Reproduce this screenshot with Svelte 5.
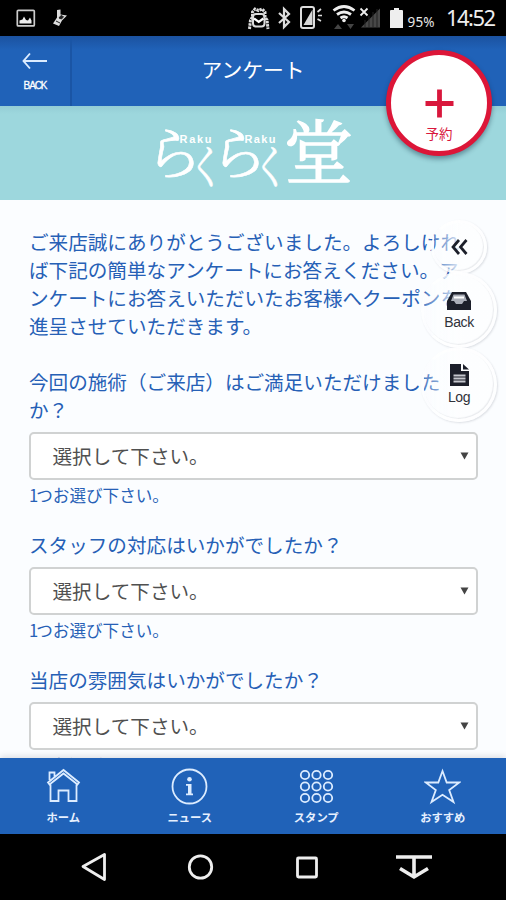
<script>
    const questions = [
        ['今回の施術（ご来店）はご満足いただけました', 'か？'],
        ['スタッフの対応はいかがでしたか？'],
        ['当店の雰囲気はいかがでしたか？']
    ];

    const intro = [
        'ご来店誠にありがとうございました。よろしけれ',
        'ば下記の簡単なアンケートにお答えください。ア',
        'ンケートにお答えいただいたお客様へクーポンを',
        '進呈させていただきます。'
    ];

    const tabs = [
        { name: 'home', label: 'ホーム' },
        { name: 'news', label: 'ニュース' },
        { name: 'stamp', label: 'スタンプ' },
        { name: 'star', label: 'おすすめ' }
    ];

    const dots = [7, 18.5, 30];
</script>

<div class="screen">
    <div class="status">
        <svg width="506" height="36" viewBox="0 0 506 36">
            <!-- picture -->
            <rect x="17.3" y="10.3" width="17" height="15.6" rx="1" fill="none" stroke="#ccc" stroke-width="1.7" />
            <path d="M19.500 23.500v-3l3-1 1.500-3 2 3.500 2 .5 2-3 1.500 3v3z" fill="#eee" />
            <!-- cleaner -->
            <path d="M57 10l3.500-.5v5l6.500 1-5 5-3 5.500-6-2.500 4-6z" fill="#ddd" />
            <path d="M61 15.500l2.500 1.200-2 2.300-2.500-1zM56 21l4 2" fill="#222" stroke="#222" />
            <!-- mascot -->
            <path d="M249.500 29l1-9 2-3V12l2.500-3 3.500 1.500L262 9l3 3v5l2 3 1 9" fill="none" stroke="#ddd" stroke-width="3" stroke-dasharray="2.500 .8" />
            <rect x="253" y="14" width="11.500" height="12.500" rx="3" fill="none" stroke="#ddd" stroke-width="2" />
            <path d="M254 18.500l4.700 3.500 4.700-3.500" fill="none" stroke="#fff" stroke-width="2.200" />
            <!-- bluetooth -->
            <path d="M279 13l10 9-5 5V9l5 5-10 9" fill="none" stroke="#ddd" stroke-width="2.200" />
            <!-- phone -->
            <rect x="301" y="7" width="13" height="21" rx="2" fill="none" stroke="#ddd" stroke-width="2" />
            <path d="M303.500 25l9-15.500V25z" fill="#eee" opacity=".9" />
            <path d="M317.500 12l3.500-3M318 15.500h4M317.500 19l3.500 2" stroke="#ddd" stroke-width="1.700" />
            <!-- wifi -->
            <g fill="none" stroke="#eee" stroke-width="2.800">
                <path d="M333.500 10.500q10.500-8 21 0" />
                <path d="M337 14.500q7-5 14 0" />
                <path d="M340.500 18q3.500-2.500 7 0" />
            </g>
            <circle cx="344" cy="20.500" r="1.800" fill="#eee" />
            <path d="M334 29l4-5 4 5zM347 24h7l-3.500 5z" fill="#444" />
            <!-- signal -->
            <path d="M360.500 8.500l7 7M367.500 8.500l-7 7" stroke="#eee" stroke-width="1.800" />
            <path d="M361 27.500l19-19v19z" fill="#484848" />
            <path d="M365 20v8M369 16v12M373 12v16M377 9v19" stroke="#222" />
            <!-- battery -->
            <path d="M391 10h3v-2h5v2h3a1 1 0 0 1 1 1v17h-13V11a1 1 0 0 1 1-1z" fill="#eee" />
            <text x="407.500" y="27" class="percent" textLength="27">95%</text>
            <text x="446" y="26" class="clock" textLength="50">14:52</text>
        </svg>
    </div>

    <header>
        <div class="back">
            <svg width="26" height="18" viewBox="0 0 26 18">
                <path d="M25 9H1.500M8 1.500L1.500 9 8 16.500" fill="none" stroke="#dcecff" stroke-width="1.900" />
            </svg>
            <span>BACK</span>
        </div>
        <h1>アンケート</h1>
    </header>

    <div class="banner">
        <svg width="506" height="94" viewBox="0 0 506 94" fill="#fff">
            <g class="kana">
                <text transform="translate(146 67.600) scale(1.215 1.230)">ら</text>
                <text transform="translate(188 76.500) scale(.79 1)">く</text>
                <text transform="translate(211 67.600) scale(1.215 1.230)">ら</text>
                <text transform="translate(252.500 76.500) scale(.79 1)">く</text>
            </g>
            <text class="kanji" x="284" y="71.500">堂</text>
            <text class="roman" x="179.500" y="37" textLength="32">Raku</text>
            <text class="roman" x="244.500" y="37" textLength="31">Raku</text>
        </svg>
    </div>

    <main>
        <p class="intro">
            {#each intro as line}
                <span>{line}</span>
            {/each}
        </p>
        {#each questions as lines}
            <div class="question">
                <div class="label">
                    {#each lines as line}
                        <span>{line}</span>
                    {/each}
                </div>
                <div class="select">
                    <span>選択して下さい。</span>
                    <svg width="9" height="8" viewBox="0 0 9 8"><path d="M.5.500h8L4.500 7.500z" fill="#444" /></svg>
                </div>
                <div class="hint">1つお選び下さい。</div>
            </div>
        {/each}
    </main>

    <nav class="tabs">
        {#each tabs as tab}
            <div class="tab">
                <svg width="37" height="37" viewBox="0 0 37 37" fill="none" stroke="#dcecff" stroke-width="1.800">
                    {#if tab.name === 'home'}
                        <path d="M3 14.500L18.500 2 34 14.500l-1.500 2L18.500 5.500 4.500 16.500zM4.500 12V4.500h5v4M5.500 16.500V33h8V22.500h10V33h8V16.500" />
                    {:else if tab.name === 'news'}
                        <circle cx="18.500" cy="18.500" r="17" />
                        <circle cx="18.500" cy="11.300" r="2.300" fill="#dcecff" stroke="none" />
                        <path d="M15 16h5.500v9.500H22v1.700h-7v-1.700h2v-7.800h-2z" fill="#dcecff" stroke="none" />
                    {:else if tab.name === 'stamp'}
                        {#each dots as y}
                            {#each dots as x}
                                <circle cx={x} cy={y} r="4.200" />
                            {/each}
                        {/each}
                    {:else}
                        <path d="M18.500 3l4.200 11.500h12.600L25.200 22 29.500 34 18.500 26.800 7.500 34l4.300-12L1.700 14.500h12.600z" />
                    {/if}
                </svg>
                <span>{tab.label}</span>
            </div>
        {/each}
    </nav>

    <div class="android">
        <svg width="506" height="66" viewBox="0 0 506 66" fill="none" stroke="#eee" stroke-width="2.800">
            <path d="M83 32.500L104.500 20.500v25z" stroke-linejoin="round" />
            <circle cx="200.500" cy="33" r="11.200" />
            <rect x="297.500" y="24" width="19" height="19" rx="1" />
            <path d="M396 23h36M414 23v20M400 34.500l14 8.500 14-8.500" stroke-width="3.600" />
        </svg>
    </div>

    <div class="reserve">
        <svg width="29" height="29" viewBox="0 0 29 29">
            <path d="M14.500.500v28M.5 14.500h28" stroke="#d9173c" stroke-width="4.800" />
        </svg>
        <span>予約</span>
    </div>

    <div class="bubble fold">
        <svg width="17" height="16" viewBox="0 0 17 16">
            <path d="M8 1L2 8l6 7M15.500 1l-6 7 6 7" fill="none" stroke="#1c1f2a" stroke-width="2.700" />
        </svg>
    </div>
    <div class="bubble inbox">
        <svg width="24" height="18" viewBox="0 0 24 18">
            <path d="M5 0h14l5 9v9H0V9z" fill="#1c1f2a" />
            <path d="M6.500 2.500h11L20 9h-3l-2 3H9L7 9H4z" fill="#aaaeb8" />
            <path d="M7 5.500h10" stroke="#fff" stroke-width="2" />
        </svg>
        <span>Back</span>
    </div>
    <div class="bubble log">
        <svg width="19" height="22" viewBox="0 0 19 22">
            <path d="M0 0h11v7h8v15H0zM13 0l6 5.500h-6z" fill="#1c1f2a" />
            <path d="M3.500 11.500h12M3.500 14.500h12M3.500 17.500h12" stroke="#c5c7ce" stroke-width="1.800" />
        </svg>
        <span>Log</span>
    </div>
</div>

<style>
    :global(body) {
        margin: 0;
        background: #000;
    }

    .screen {
        position: relative;
        display: flex;
        flex-direction: column;
        width: 506px;
        height: 900px;
        overflow: hidden;
        font-family: "Noto Sans CJK JP", sans-serif;
        color: #2660b6;
    }

    svg {
        display: block;
        flex: none;
    }

    .status {
        height: 36px;
        background: #000;
    }

    .percent {
        fill: #e6e6e6;
        font: 13.5px "Noto Sans", sans-serif;
    }

    .clock {
        fill: #eee;
        font: 22px "Noto Sans", sans-serif;
    }

    header {
        display: flex;
        height: 70px;
        flex: none;
        background: linear-gradient(#1b52a0, #2062b8 14px, #2062b8);
        color: #fff;
    }

    .back {
        display: flex;
        flex-direction: column;
        align-items: center;
        box-sizing: border-box;
        width: 72px;
        padding-top: 16px;
        border-right: 2px solid #1a55a5;
    }

    .back span {
        margin-top: 9px;
        font: 10px/14px "Liberation Sans", sans-serif;
        letter-spacing: -1.1px;
        -webkit-text-stroke: 0.3px #fff;
    }

    h1 {
        flex: 1;
        margin: 0;
        padding-right: 72px;
        text-align: center;
        font-size: 20.8px;
        line-height: 66px;
        font-weight: 400;
    }

    .banner {
        height: 94px;
        flex: none;
        background: linear-gradient(#94cdd5, #9dd7dd 8px);
    }

    .kana {
        font: 46px "Noto Serif CJK JP", "Noto Sans CJK JP", serif;
        stroke: #fff;
        stroke-width: 0.5px;
    }

    .kanji {
        font: 69px "Noto Serif CJK JP", "Noto Sans CJK JP", serif;
        stroke: #fff;
        stroke-width: 1.4px;
    }

    .roman {
        font: bold 11px "Liberation Sans", sans-serif;
    }

    main {
        flex: 1;
        min-height: 0;
        overflow: hidden;
        padding: 28px 28px 0 29px;
        background: #fbfdff;
        font-size: 19.6px;
        line-height: 28px;
    }

    .intro {
        margin: 0 0 28px;
    }

    .intro span,
    .label span {
        display: block;
        white-space: nowrap;
    }

    .question {
        margin-bottom: 25px;
    }

    .select {
        display: flex;
        align-items: center;
        justify-content: space-between;
        box-sizing: border-box;
        height: 48px;
        margin-top: 8px;
        padding: 0 7px 1px 21.5px;
        border: 2px solid #d0d2d2;
        border-radius: 5px;
        background: #fff;
        color: #505050;
    }

    .hint {
        margin-top: 4px;
        font-size: 16.6px;
        line-height: 22px;
    }

    .hint::first-letter {
        letter-spacing: -2px;
    }

    .tabs {
        display: flex;
        height: 76px;
        flex: none;
        background: #2062b8;
        box-shadow: 0 -2px 6px rgba(0, 0, 30, 0.12);
        z-index: 1;
    }

    .tab {
        flex: 1;
        display: flex;
        flex-direction: column;
        align-items: center;
        padding-top: 10px;
        color: #e6f0ff;
    }

    .tab span {
        margin-top: 4px;
        font-size: 11.3px;
        line-height: 16px;
        font-weight: 700;
    }

    .android {
        height: 66px;
        flex: none;
        background: #000;
    }

    .reserve {
        position: absolute;
        left: 386px;
        top: 50px;
        display: flex;
        flex-direction: column;
        align-items: center;
        box-sizing: border-box;
        width: 106px;
        height: 106px;
        padding-top: 34px;
        border: 5px solid #dc1638;
        border-radius: 50%;
        background: #fff;
        box-shadow: 0 3px 5px rgba(0, 30, 50, 0.4);
        color: #d9173c;
    }

    .reserve span {
        margin-top: 5px;
        font-size: 13.5px;
        line-height: 20px;
    }

    .bubble {
        position: absolute;
        display: flex;
        flex-direction: column;
        align-items: center;
        box-sizing: border-box;
        border-radius: 50%;
        background: linear-gradient(90deg, rgba(253, 254, 255, 0.2), rgba(253, 254, 255, 0.55) 30%, rgba(253, 254, 255, 0.95) 55%);
        border: 3px solid rgba(255, 255, 255, 0.6);
        border-left-color: transparent;
        box-shadow: 1px 1px 2px rgba(60, 70, 90, 0.16), inset -1px -1px 1px rgba(60, 70, 90, 0.1);
        color: #30323a;
        font: 14px/18px "Liberation Sans", sans-serif;
    }

    .bubble span {
        letter-spacing: -0.4px;
    }

    .fold {
        left: 431px;
        top: 220px;
        width: 56px;
        height: 54px;
        padding-top: 16px;
    }

    .inbox {
        left: 421px;
        top: 272px;
        width: 76px;
        height: 76px;
        padding-top: 17px;
    }

    .inbox span {
        margin-top: 3px;
    }

    .log {
        left: 421px;
        top: 347px;
        width: 76px;
        height: 75px;
        padding-top: 14px;
    }

    .log span {
        margin-top: 2px;
    }
</style>
